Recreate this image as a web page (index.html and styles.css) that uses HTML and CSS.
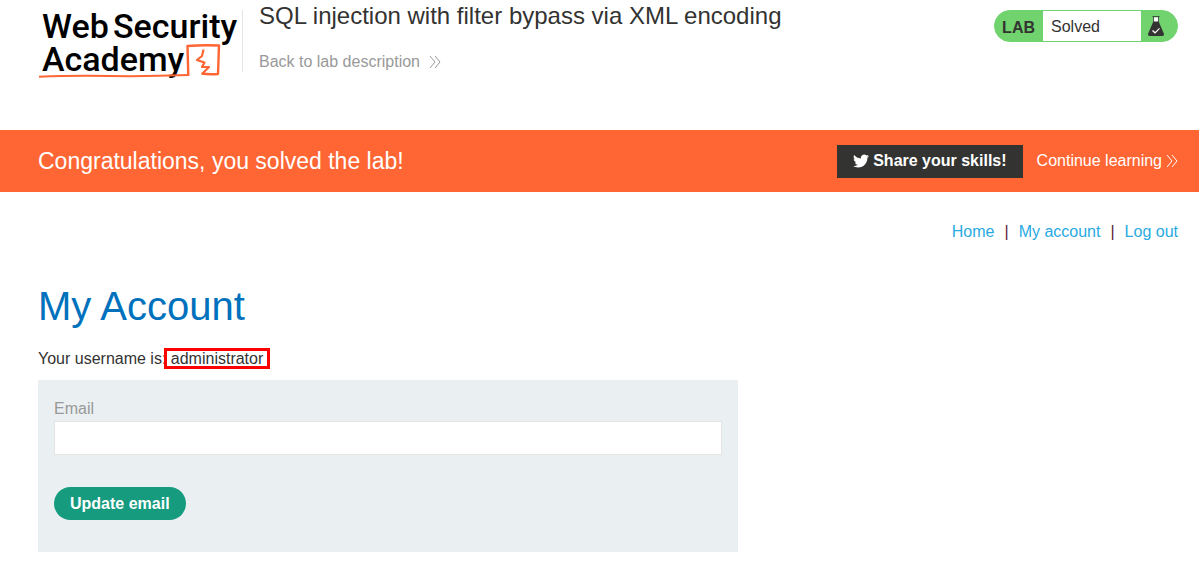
FILE: index.html
```html
<!DOCTYPE html>
<html lang="en">
<head>
<meta charset="utf-8">
<meta name="viewport" content="width=device-width, initial-scale=1">
<title>SQL injection with filter bypass via XML encoding</title>
<link rel="stylesheet" href="styles.css">
</head>
<body>
<header class="lab-header">
  <a class="logo" href="#" aria-label="Web Security Academy">
    <svg width="205" height="72" viewBox="38 9 205 72">
      <g class="logo-text">
        <text x="42" y="38">Web</text>
        <text x="113" y="38">Security</text>
        <text x="42" y="71">Academy</text>
      </g>
      <path d="M242.500 10V72" stroke="#e4e4e4"/>
      <g fill="none" stroke="#ff6633" stroke-linejoin="round">
        <path d="M39 76.700 Q70 75.500 110 76 T188 75" stroke-width="2"/>
        <path d="M188.300 76 L187.500 46 Q203 44.800 219 45.500 L218 74 Q209 74.800 201.500 73.500" stroke-width="2.400"/>
        <path d="M203.500 49.500 L202 56 L197 60 L204.500 62.500 L202 67 L209 67 L202 74" stroke-width="2.200"/>
      </g>
    </svg>
  </a>
  <div class="title">
    <h2>SQL injection with filter bypass via XML encoding</h2>
    <a class="back" href="#">Back to lab description
      <svg class="chevrons" width="12" height="14" viewBox="0 0 12 14"><path d="M1 1l5 6-5 6M6 1l5 6-5 6"/></svg>
    </a>
  </div>
  <div class="status">
    <span class="status-lab">LAB</span>
    <span class="status-text">Solved</span>
    <span class="status-icon">
      <svg width="18" height="22" viewBox="0 0 18 22">
        <path d="M6.500 2.500h5v5h-5z" fill="#fff"/>
        <path d="M5.500 1.500h7M6.500 1.500V7M11.500 1.500V7" stroke="#333332" stroke-width=".8"/>
        <path d="M6.300 6.500h5.400L17 19q.3 2-1.700 2H2.700Q.7 21 1 19z" fill="#333332"/>
        <path d="M5.500 15.500l2.500 2.300 4.500-4.500" fill="none" stroke="#fff" stroke-width="1.200"/>
      </svg>
    </span>
  </div>
</header>
<section class="banner">
  <h4>Congratulations, you solved the lab!</h4>
  <div class="banner-links">
    <a class="share" href="#">
      <svg width="16" height="16" viewBox="0 0 24 24"><path fill="#fff" d="M23.950 4.570a10 10 0 0 1-2.820.78 4.960 4.960 0 0 0 2.160-2.730c-.95.560-2 .96-3.130 1.180a4.920 4.920 0 0 0-8.380 4.480C7.690 8.090 4.070 6.130 1.640 3.160a4.820 4.820 0 0 0-.67 2.480c0 1.710.87 3.210 2.190 4.100a4.900 4.900 0 0 1-2.230-.62v.06a4.920 4.920 0 0 0 3.950 4.830 5 5 0 0 1-2.210.08 4.940 4.940 0 0 0 4.600 3.420A9.870 9.870 0 0 1 0 19.540a13.990 13.990 0 0 0 7.550 2.210c9.050 0 14-7.500 14-13.980 0-.21 0-.42-.02-.63a9.940 9.940 0 0 0 2.460-2.550z"/></svg>
      Share your skills!
    </a>
    <a class="continue" href="#">Continue learning
      <svg class="chevrons" width="12" height="14" viewBox="0 0 12 14"><path d="M1 1l5 6-5 6M6 1l5 6-5 6"/></svg>
    </a>
  </div>
</section>
<main class="content">
  <nav class="top-links">
    <a href="#">Home</a><span>|</span><a href="#">My account</a><span>|</span><a href="#">Log out</a>
  </nav>
  <h1>My Account</h1>
  <p class="username">Your username is: <span class="marked">administrator</span></p>
  <form class="login-form">
    <label for="email">Email</label>
    <input id="email" type="email" name="email">
    <button type="submit">Update email</button>
  </form>
</main>
</body>
</html>
```
FILE: styles.css
```css
* { box-sizing: border-box; }
body {
  margin: 0;
  background: #fff;
  color: #333332;
  font: 16px/24px "Liberation Sans", Arial, sans-serif;
}
a { text-decoration: none; }
h1, h2, h4, p { margin: 0; font-weight: 400; }
.lab-header {
  display: flex;
  align-items: flex-start;
  min-height: 130px;
  padding: 0 21px 0 38px;
}
.logo { padding-top: 9px; }
.logo svg { display: block; }
.logo-text {
  font-family: Roboto, sans-serif;
  font-size: 34px;
  font-weight: 500;
}
.title { flex: 1; padding-left: 16px; }
.title h2 { font-size: 24px; line-height: 32px; }
.back {
  display: inline-flex;
  align-items: center;
  gap: 9px;
  margin-top: 18px;
  color: #999;
}
.chevrons { fill: none; stroke: currentColor; stroke-width: 1; }
.status {
  display: flex;
  height: 32px;
  margin-top: 10px;
  border: 1px solid #70d36d;
  border-radius: 16px;
  background: #70d36d;
  overflow: hidden;
}
.status-lab { padding: 5px 8px 0 7px; font-weight: 700; }
.status-text { width: 98px; padding: 4px 8px 0; background: #fff; }
.status-icon { width: 36px; padding: 4px 6px; }
.status-icon svg { display: block; }
.banner {
  display: flex;
  align-items: center;
  justify-content: space-between;
  min-height: 62px;
  padding: 0 21px 0 38px;
  background: #ff6633;
  color: #fff;
}
.banner h4 { font-size: 23px; line-height: 32px; }
.banner-links { display: flex; align-items: center; gap: 14px; }
.share {
  display: flex;
  align-items: center;
  gap: 4px;
  height: 33px;
  padding: 0 16px;
  background: #333332;
  color: #fff;
  font-weight: 700;
}
.continue { display: flex; align-items: center; gap: 4px; color: #fff; }
.content { padding: 28px 21px 22px 38px; }
.top-links { display: flex; justify-content: flex-end; gap: 10px; }
.top-links a { color: #29aae2; }
.top-links span { color: #5c2030; }
h1 { margin-top: 38px; color: #0071bc; font-size: 40px; line-height: 48px; }
.username { margin-top: 17px; }
.marked { position: relative; }
.marked::after {
  content: "";
  position: absolute;
  inset: -2px -7px;
  border: 3px solid #f00;
}
.login-form {
  display: flex;
  flex-direction: column;
  align-items: flex-start;
  max-width: 700px;
  margin-top: 9px;
  padding: 17px 16px 32px;
  background: #eaeff2;
}
.login-form label { color: #999; }
.login-form input {
  width: 100%;
  height: 34px;
  padding: 0 8px;
  border: 1px solid #e4e4e4;
  background: #fff;
  font: inherit;
}
.login-form button {
  height: 33px;
  margin-top: 32px;
  padding: 0 16px;
  border: 0;
  border-radius: 17px;
  background: #169b7f;
  color: #fff;
  font: inherit;
  font-weight: 700;
}
```
